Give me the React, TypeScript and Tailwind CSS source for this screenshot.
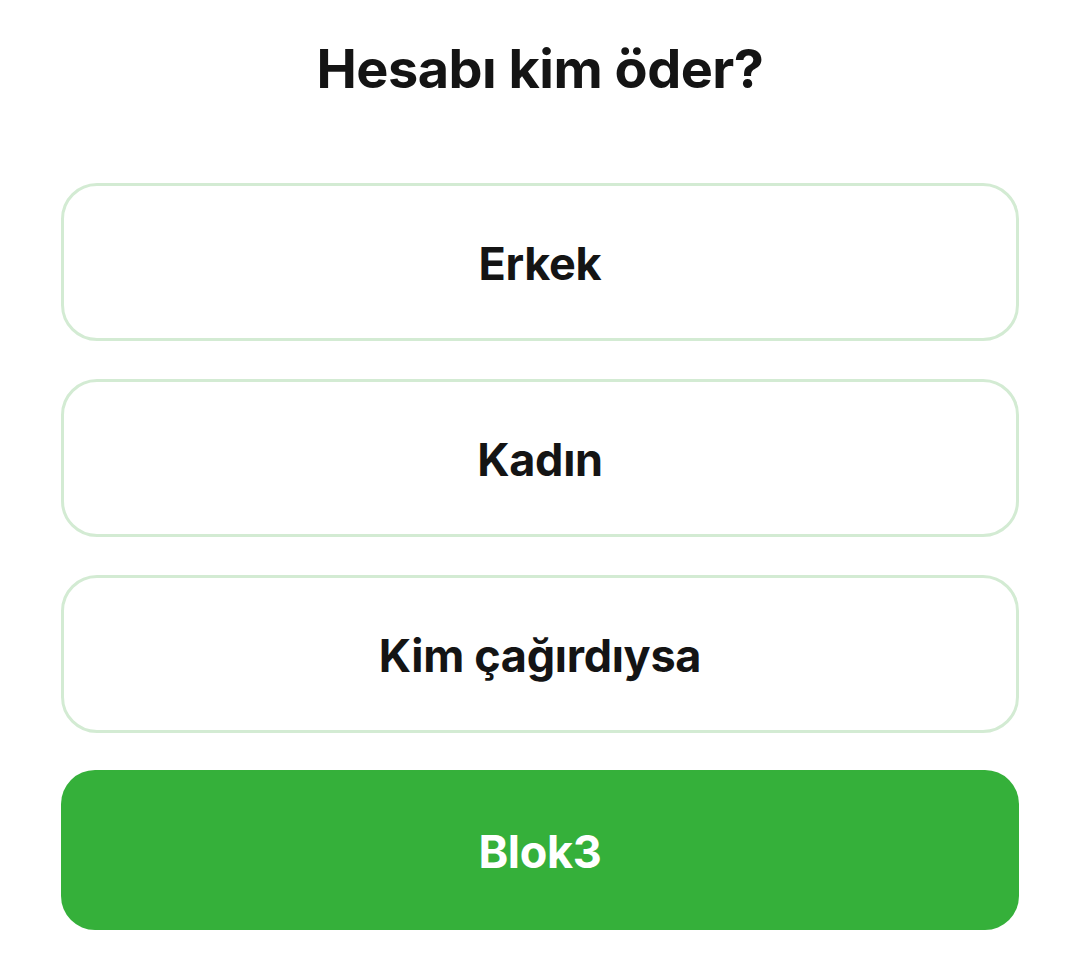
import React from "react";

export default function App() {
  const options = ["Erkek", "Kadın", "Kim çağırdıysa"];
  return (
    <div
      className="w-[1080px] h-[965px] bg-white flex flex-col px-[61px]"
      style={{ fontFamily: "Inter, 'Noto Sans', sans-serif" }}
    >
      <h1 className="h-[140px] pt-[39px] text-center text-[54px] leading-[60px] font-bold text-[#141414] tracking-[-0.5px]">
        Hesabı kim öder?
      </h1>
      <div className="flex flex-col gap-[38px] mt-[43px]">
        {options.map((o) => (
          <button
            key={o}
            className="h-[158px] w-full rounded-[36px] border-[3px] border-[#d3ebd3] bg-white flex items-center justify-center pt-[4px] text-[45px] font-bold text-[#141414] tracking-[-0.3px]"
          >
            {o}
          </button>
        ))}
        <button className="h-[160px] w-full rounded-[34px] bg-[#35b03a] flex items-center justify-center pt-[4px] text-[45px] font-bold text-white tracking-[-0.3px] -mt-[1px]">
          Blok3
        </button>
      </div>
    </div>
  );
}
